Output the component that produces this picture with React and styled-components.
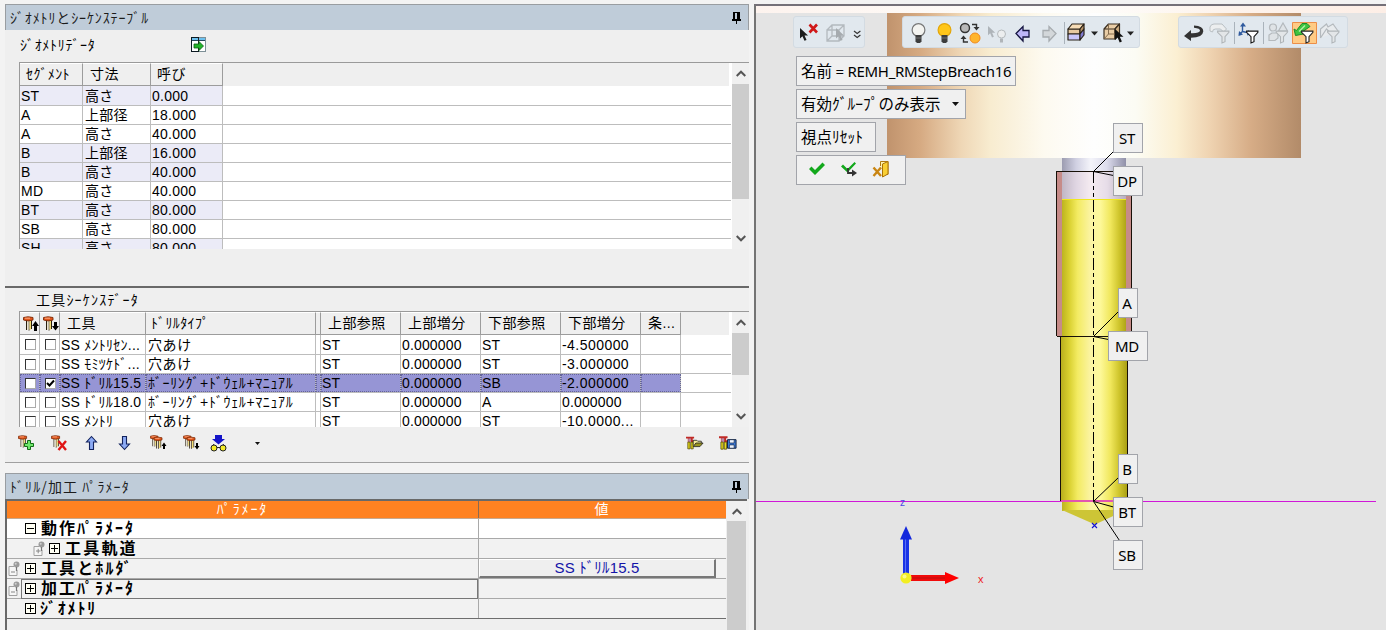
import React from "react";
import styled, { createGlobalStyle } from "styled-components";

const Global = createGlobalStyle`
  * { box-sizing: border-box; }
  body { margin: 0; background: #f3f3f3; overflow: hidden; }
`;

const UI = `"Liberation Sans", "Noto Sans CJK JP", sans-serif`;
const SEGOE = `"Noto Sans", "Noto Sans CJK JP", sans-serif`;

const Window = styled.div`
  display: flex;
  width: 1386px;
  height: 630px;
  overflow: hidden;
  background: #f3f3f3;
  font-family: ${UI};
  font-size: 14px;
  color: #000;
`;

const Side = styled.div`
  width: 754px;
  height: 630px;
  padding: 4px 5px 0;
  display: flex;
  flex-direction: column;
  gap: 10px;
`;

const Panel = styled.section`
  width: 744px;
  height: ${(p) => p.$h}px;
  flex: none;
  background: #efefef;
  display: flex;
  flex-direction: column;
`;

const TitleBar = styled.header`
  height: 26px;
  flex: none;
  display: flex;
  align-items: center;
  justify-content: space-between;
  padding: 0 7px 0 4px;
  background: #bfccd9;
  border: 1px solid #999da1;
  border-bottom: none;
  font-family: "Noto Sans CJK JP", sans-serif;
  font-size: 14px;
  letter-spacing: ${(p) => p.$ls || 0.87}px;
  line-height: 22px;
  color: #1c1c1c;
`;

const TitleText = styled.span`
  height: 24px;
`;

const SectionLabel = styled.div`
  height: ${(p) => p.$h}px;
  flex: none;
  display: flex;
  align-items: center;
  padding-left: ${(p) => p.$left}px;
  padding-bottom: ${(p) => p.$lift || 0}px;
  letter-spacing: ${(p) => p.$ls}px;
  line-height: 20px;
`;

const LabelIcon = styled.span`
  display: flex;
  margin-left: 96px;
`;

const TableBox = styled.div`
  margin-left: 14px;
  width: 730px;
  height: ${(p) => p.$h}px;
  flex: none;
  display: flex;
  border-top: 1px solid #9a9a9a;
  border-left: 1px solid #9a9a9a;
  background: #fff;
  overflow: hidden;
`;

const Rows = styled.div`
  width: 711px;
  margin-right: 1px;
  overflow: hidden;
`;

const HeadRow = styled.div`
  display: grid;
  grid-template-columns: ${(p) => p.$cols};
  height: 23px;
  background: #efefef;
  margin-right: 2px;
`;

const HeadCell = styled.div`
  height: 23px;
  border-top: 1px solid #fff;
  border-right: 1px solid #9c9c9c;
  border-bottom: 1px solid #9c9c9c;
  padding-left: ${(p) => (p.$pad === undefined ? 7 : p.$pad)}px;
  padding-top: ${(p) => (p.$icon ? 3 : 0)}px;
  letter-spacing: 0.4px;
  line-height: 21px;
  white-space: nowrap;
  overflow: hidden;
`;

const Row = styled.div`
  display: grid;
  grid-template-columns: ${(p) => p.$cols};
  height: ${(p) => (p.$first ? 20 : 19)}px;
  line-height: ${(p) => (p.$first ? 20 : 18)}px;
  border-bottom: 1px solid #bdbdbd;
`;

const Cell = styled.div`
  padding-left: ${(p) => (p.$pad === undefined ? 2 : p.$pad)}px;
  border-right: 1px solid #bdbdbd;
  background: ${(p) => (p.$sel ? "#9695d5" : p.$tint ? "#ebebf7" : "transparent")};
  outline: ${(p) => (p.$sel ? "1px dotted #66659a" : "none")};
  outline-offset: -1px;
  display: ${(p) => (p.$center ? "flex" : "block")};
  align-items: center;
  justify-content: center;
  letter-spacing: ${(p) => (p.$ls === undefined ? 0.25 : p.$ls)}px;
  white-space: nowrap;
  overflow: hidden;
`;

const Check = styled.span`
  width: 11px;
  height: 11px;
  border: 1px solid #333;
  border-right-color: #aaa;
  border-bottom-color: #aaa;
  background: #fff;
  display: flex;
`;

const ScrollTrack = styled.div`
  width: ${(p) => p.$w || 17}px;
  flex: none;
  display: flex;
  flex-direction: column;
  justify-content: space-between;
  background: #f0f0f0;
`;

const ScrollArrow = styled.div`
  height: ${(p) => p.$h || 21}px;
  display: flex;
  align-items: center;
  justify-content: center;
`;

const Thumb = styled.div`
  height: ${(p) => p.$h}px;
  background: #cccccc;
  margin-bottom: auto;
`;

const Divider = styled.div`
  height: 2px;
  flex: none;
  background: #696969;
`;

const ToolStrip = styled.div`
  height: 36px;
  flex: none;
  display: flex;
  align-items: center;
  padding: 0 10px 3px 13px;
  border-bottom: 1px solid #a0a0a0;
`;

const StripIcon = styled.span`
  display: flex;
  width: 18px;
  margin-right: ${(p) => p.$gap}px;
`;

const Push = styled.span`
  flex: 1;
`;

const ParamBox = styled.div`
  display: flex;
  flex: 1;
  border-top: 2px solid #696969;
  border-left: 2px solid #696969;
  margin-right: 2px;
`;

const ParamRows = styled.div`
  width: 719px;
  margin-right: 1px;
`;

const ParamHead = styled.div`
  display: grid;
  grid-template-columns: 472px 1fr;
  height: 18px;
  background: #ff8221;
  border-bottom: 1px solid #c6a990;
  color: #fff;
  line-height: 17px;
  text-align: center;
  letter-spacing: 1.9px;
`;

const ParamHeadCell = styled.div`
  border-right: ${(p) => (p.$line ? "1px solid #8c6a50" : "none")};
`;

const ParamRow = styled.div`
  display: grid;
  grid-template-columns: 472px 1fr;
  height: 20px;
  background: ${(p) => (p.$white ? "#fff" : "#f2f2f2")};
  border-bottom: 1px solid ${(p) => (p.$dark ? "#6e6e6e" : "#a9a9a9")};
`;

const ParamName = styled.div`
  display: flex;
  align-items: center;
  height: 19px;
  border-right: 1px solid #a9a9a9;
  padding-left: ${(p) => p.$left}px;
  font-family: "Noto Sans CJK JP", sans-serif;
  font-weight: 700;
  font-size: 16px;
  line-height: 17px;
  letter-spacing: ${(p) => p.$ls}px;
  white-space: nowrap;
`;

const ParamText = styled.span`
  height: 20px;
`;

const Focus = styled.div`
  display: flex;
  align-items: center;
  height: 20px;
  flex: 1;
  margin-left: 1px;
  padding-left: 3px;
  border: 1px solid #777;
`;

const Gap = styled.span`
  width: ${(p) => p.$w}px;
  flex: none;
`;

const ParamValue = styled.div`
  display: flex;
`;

const ValueButton = styled.button`
  width: 237px;
  height: 19px;
  padding: 0;
  border: 1px solid #fff;
  border-right: 2px solid #777;
  border-bottom: 2px solid #777;
  background: #efefef;
  color: #1414a8;
  font-family: ${UI};
  font-size: 15px;
  letter-spacing: 0.15px;
  line-height: 16px;
`;

const Viewport = styled.main`
  position: relative;
  width: 632px;
  height: 626px;
  margin-top: 4px;
  border-left: 2px solid #747474;
  border-top: 2px solid #747078;
  background: #e4e4e4;
  overflow: hidden;
`;

const Scene = styled.svg`
  position: absolute;
  left: 0;
  top: 0;
`;

const Overlay = styled.div`
  position: absolute;
  left: 0;
  top: 0;
  display: flex;
  flex-direction: column;
  align-items: flex-start;
  padding: 10px 0 0 37px;
`;

const ToolbarRow = styled.div`
  display: flex;
  margin-bottom: 8px;
`;

const Toolbar = styled.div`
  display: flex;
  align-items: center;
  width: ${(p) => p.$w}px;
  height: 32px;
  margin-right: ${(p) => p.$gap || 0}px;
  background: #e1e8ee;
  border: 1px solid #d3dbe2;
  border-radius: 3px;
`;

const Tag = styled.div`
  display: flex;
  align-items: center;
  height: 30px;
  width: ${(p) => p.$w}px;
  margin: 0 0 3px 3px;
  padding-left: ${(p) => (p.$flush ? 0 : 4)}px;
  background: #f0f0f0;
  border: 1px solid #a2a4aa;
  font-family: ${SEGOE};
  font-size: 15.5px;
  letter-spacing: ${(p) => p.$ls || 0}px;
  line-height: 28px;
  white-space: nowrap;
`;

const Latin = styled.span`
  font-size: 15px;
  letter-spacing: -0.3px;
  white-space: pre;
`;

const Marker = styled.div`
  position: absolute;
  left: ${(p) => p.$x - 756}px;
  top: ${(p) => p.$y - 6}px;
  width: ${(p) => p.$w}px;
  height: 30px;
  background: #f0f0f0;
  border: 1px solid #a2a4aa;
  font-family: ${SEGOE};
  font-size: 15px;
  letter-spacing: -0.3px;
  line-height: 28px;
  padding-right: 2px;
  text-align: center;
`;

/* ---------- icons ---------- */

const Pin = () => (
  <svg width="9" height="12" viewBox="0 0 9 12" shapeRendering="crispEdges">
    <path d="M1 0h7v7h1v2H5v3H4V9H0V7h1z" fill="#000" />
    <path d="M3 1h2v6H3z" fill="#bfccd9" />
  </svg>
);

const Chevron = ({ down }) => (
  <svg width="10" height="7" viewBox="0 0 10 7">
    <path d={down ? "M.7 1 5 5.3 9.3 1" : "M.7 6 5 1.7 9.3 6"} fill="none" stroke="#555" strokeWidth="2" />
  </svg>
);

const ImportIcon = () => (
  <svg width="15" height="15" viewBox="0 0 15 15" shapeRendering="crispEdges">
    <path d="M.5.5h14v14H.5z" fill="#fff" stroke="#7d8f96" />
    <path d="M8 .5H.5v14H8" fill="none" stroke="#0c1a22" />
    <path d="M1 1h13v2H1z" fill="#6cc0ee" />
    <path d="M1 3h13v1H1z" fill="#24465a" />
    <path d="M7 1h1v13H7z" fill="#222" />
    <path d="M3 7h5V4.5l4.500 4.500L8 13.500V11H3z" fill="#23b42a" stroke="#0a5f10" strokeWidth=".8" shapeRendering="auto" />
  </svg>
);

const Drill = ({ s = 1 }) => (
  <g transform={`scale(${s})`}>
    <path d="M3 4h1v10H3zM5.500 4h1v10.500h-1zM8 4h1v9H8z" fill="#2a2010" />
    <path d="M4 4h1.500v10H4z" fill="#e9e2cc" />
    <path d="M6.500 4H8v9.500H6.500z" fill="#f2dc72" />
    <path d="M.5 1.500Q5 0 10 1.500V4Q5 5.800.5 4z" fill="#e2571c" stroke="#7a2a08" strokeWidth=".9" />
    <path d="M2 2.200h5" stroke="#ffb08a" strokeWidth=".9" />
  </g>
);

const HeadDrill = ({ down }) => (
  <svg width="16" height="16" viewBox="0 0 16 16">
    <Drill />
    <path d={down ? "M11 6h3v4h2l-3.500 4.500L9 10h2z" : "M11 15h3v-5h2l-3.500-5L9 10h2z"} fill="#000" />
  </svg>
);

const AddDrill = () => (
  <svg width="17" height="16" viewBox="0 0 17 16">
    <Drill s={0.86} />
    <path d="M9.500 5.500h3v3h3v3h-3v3h-3v-3h-3v-3h3z" fill="#6ee86a" stroke="#126b16" />
  </svg>
);

const DeleteDrill = () => (
  <svg width="17" height="16" viewBox="0 0 17 16">
    <Drill s={0.86} />
    <path d="m7.500 6 7.500 9m0-9-7.500 9" stroke="#e01414" strokeWidth="2.400" />
  </svg>
);

const MoveArrow = ({ down }) => (
  <svg width="13" height="16" viewBox="0 0 13 16">
    <path
      transform={down ? "rotate(180 6.500 8)" : undefined}
      d="M6.500 1.500 11.500 7H8.500v7.500h-4V7H1.500z"
      fill="#8caaf4"
      stroke="#13235e"
      strokeWidth="1.100"
    />
  </svg>
);

const MultiDrill = ({ down }) => (
  <svg width="17" height="16" viewBox="0 0 17 16">
    <Drill s={0.8} />
    <g transform="translate(3.500 1.500)">
      <Drill s={0.85} />
    </g>
    <path d={down ? "M13 8h2v3h1.500L14 14.500l-2.500-3.500H13z" : "M13 14h2v-3h1.500L14 7.500l-2.500 3.500H13z"} fill="#000" />
  </svg>
);

const GlassesIcon = () => (
  <svg width="17" height="17" viewBox="0 0 17 17">
    <path d="M5 0h7v4h3L8.500 9.500 2 4h3z" fill="#1414c8" />
    <path d="m2 12 2-3m11 3-2-3" stroke="#222" />
    <circle cx="4" cy="13" r="3" fill="#f3ec28" stroke="#222" />
    <circle cx="13" cy="13" r="3" fill="#f3ec28" stroke="#222" />
    <path d="M7 12.500h3" stroke="#222" />
  </svg>
);

const Caret = ({ w = 7 }) => (
  <svg width={w} height={w > 5 ? 4 : 3} viewBox="0 0 7 4">
    <path d="M0 0h7L3.500 4z" fill="#111" />
  </svg>
);

const DrillStand = () => (
  <>
    <path d="M0 1h9v2H7.500v2H9v2H2V3H0z" fill="#c02a26" />
    <path d="M2.500 3h3v4h-3z" fill="#b88aa8" />
    <path d="M2 7h2.500v7.500H2zM5.500 7H8v7.500H5.500z" fill="#e6d91e" stroke="#4d4300" strokeWidth=".8" />
  </>
);

const OpenDrill = () => (
  <svg width="20" height="16" viewBox="0 0 20 16">
    <DrillStand />
    <path d="M8 11V5h4l1 1h4v2" fill="#f6ee9a" stroke="#222" strokeWidth=".9" />
    <path d="m8 12 3-4h8l-3.500 4z" fill="#9a9420" stroke="#222" strokeWidth=".9" />
  </svg>
);

const SaveDrill = () => (
  <svg width="19" height="16" viewBox="0 0 19 16">
    <DrillStand />
    <path d="M9 4.500h9v9H9z" fill="#3f7fe0" stroke="#0d1d3a" />
    <path d="M11 4.500h5v3.500h-5zM11 10h5v3.500h-5z" fill="#eef4ff" stroke="#0d1d3a" strokeWidth=".7" />
  </svg>
);

const Expander = ({ open }) => (
  <svg width="11" height="11" viewBox="0 0 11 11" shapeRendering="crispEdges">
    <path d="M.5.5h10v10H.5z" fill="#fffff4" stroke="#000" />
    <path d={open ? "M2 5.500h7" : "M2 5.500h7M5.500 2v7"} stroke="#000" />
  </svg>
);

const LinkIcon = ({ plus }) => (
  <svg width="12" height="15" viewBox="0 0 12 15">
    <path d="M6 5.500H1v9h8V9" fill="#f6f6f6" stroke="#a0a0a0" />
    <path d={plus ? "M3 10h4.500M5.200 7.800v4.500" : "M3 11h4"} stroke="#888" />
    <circle cx="8.500" cy="3.500" r="3" fill="#9b9b9b" />
    <circle cx="7.700" cy="2.700" r="1" fill="#cfcfcf" />
    <path d="M8.500 6v4" stroke="#777" strokeWidth="1.200" />
  </svg>
);

const cursor = (x, y, fill = "#1a1a1a", s = 1) => (
  <path
    transform={`translate(${x} ${y}) scale(${s})`}
    d="M0 0v11l2.600-2.400L4.700 13.500l2.200-1L4.800 7.800H8.500z"
    fill={fill}
  />
);

const bulb = (fill, ring) => (
  <g>
    <circle cx="7.500" cy="7.500" r="6.400" fill={fill} stroke={ring} strokeWidth="1.200" />
    <path d="M4.500 12.500h6V19l-1.500 1.500H6L4.500 19z" fill="#3d3d3d" />
    <path d="M5 15.500h5" stroke="#888" strokeWidth=".7" />
  </g>
);

const funnel = (x, y, fill, stroke) => (
  <path
    transform={`translate(${x} ${y})`}
    d="M.6.6h11.300v1.200L8 6.200v5L5 12.400V6.200L.6 1.800z"
    fill={fill}
    stroke={stroke}
    strokeWidth="1.100"
  />
);

const SelectTools = () => (
  <svg width="70" height="30" viewBox="794 17 70 30">
    {cursor(800, 28, "#1c1c1c", 0.95)}
    <path d="m809.500 24.500 7.500 8m0-8-7.500 8" stroke="#d01818" strokeWidth="2.600" />
    <g stroke="#b3b9be" fill="none" strokeWidth="1.300">
      <path d="M827 30h12v11h-12zM827 30l5-5h12v11l-5 5M839 30l5-5M832 25v11l-5 5M832 36h12" />
    </g>
    {cursor(836, 28, "#a6abaf", 0.95)}
    <path d="m854 31 3.200 2.500 3.200-2.500m-6.400 4 3.200 2.500 3.200-2.500" fill="none" stroke="#333" strokeWidth="1.200" />
  </svg>
);

const ViewTools = () => (
  <svg width="236" height="30" viewBox="903 17 236 30">
    <g transform="translate(911 22.500)">{bulb("#f3f3f0", "#777")}</g>
    <g transform="translate(937 22.500)">{bulb("#ffc61a", "#e3a70c")}</g>
    <circle cx="965" cy="28" r="4.500" fill="#b8b8b8" stroke="#333" strokeWidth="1.400" />
    <circle cx="975" cy="38" r="5" fill="#ffb52e" stroke="#f08a1e" />
    <path d="M972 24.500h4.500v3M963.500 38v4h4.500" fill="none" stroke="#333" strokeWidth="1.400" />
    <path d="M973.500 27h6l-3 3.500zM960.500 39h6l-3-3.500z" fill="#333" />
    {cursor(988, 26, "#aeb4b9", 0.85)}
    <circle cx="1001.500" cy="34" r="4" fill="#eceeef" stroke="#b5babd" />
    <path d="M1000 38.500h3v4h-3z" fill="#b0b5b9" />
    <path d="m1016 33.500 7-7v4h6v6.500h-6v4z" fill="#bdb6f8" stroke="#151540" strokeWidth="1.300" />
    <path d="m1056 33.500-7-7v4h-6v6.500h6v4z" fill="#d3d7da" stroke="#a7acb0" strokeWidth="1.300" />
    <path d="M1064.500 22v22" stroke="#aab3bb" />
    <g transform="translate(1067 23)" stroke="#2a2218" strokeWidth="1.200" strokeLinejoin="round">
      <path d="M1 6h12v5H1z" fill="#e7c9a0" />
      <path d="m1 6 4-5h12l-4 5z" fill="#f6dcb6" />
      <path d="m13 6 4-5v5l-4 5z" fill="#b89468" />
      <path d="M1 11h12v6H1z" fill="#c9c6fa" />
      <path d="m13 11 4-5v6l-4 5z" fill="#7f7ad0" />
    </g>
    <path d="M1091 31.500h7l-3.500 4z" fill="#222" />
    <g transform="translate(1103 23)" stroke="#3a2e20" strokeWidth="1.200" strokeLinejoin="round">
      <path d="M1 6h11v10H1zM1 6l4.500-5h11L12 6z" fill="#e9cda6" />
      <path d="m12 6 4.500-5v10L12 16z" fill="#cfae82" />
      <path d="M5.500 1v10L1 16M5.500 11H14" fill="none" stroke="#7a6244" strokeWidth=".9" />
    </g>
    {cursor(1115, 29, "#111", 1)}
    <path d="M1127 31.500h7l-3.500 4z" fill="#222" />
  </svg>
);

const FilterTools = () => (
  <svg width="168" height="30" viewBox="1179 17 168 30">
    <path
      d="M1184 36 1191 30v3.200q8.500.3 9-2.400.3-2.300-6-3v-2.300q9.500.4 9.300 5.800-.5 6.500-12.300 6.500V41z"
      fill="#333"
    />
    <path d="M1210 31v-4q1-3 4-3h8l4.500 5-3 3-3-3h-5q-3 0-3 3z" fill="#eceeef" stroke="#b9bfc3" />
    {funnel(1217, 30.5, "#e3e6e8", "#b0b5b8")}
    <path d="M1234.500 22v22" stroke="#aab3bb" />
    <path d="M1242.500 32V25m0 6.500 7 1.500m-7-1.500-3.500 3" stroke="#2f5a9e" strokeWidth="1.400" fill="none" />
    <path d="m1243 22.500 3 4h-6zM1252 34l-5 1.500 1-5.500zM1238.500 36l.5-5 4 3.500z" fill="#2f5a9e" />
    {funnel(1246, 30.5, "#fff", "#111")}
    <path d="M1263.500 22v22" stroke="#aab3bb" />
    <g fill="#dfe3e6" stroke="#b4b9bd" strokeWidth="1.200">
      <circle cx="1273" cy="27.500" r="3.500" />
      <path d="m1283 23 4.500 8h-9z" />
      <path d="M1269 35l3-2h6v5l-3 2.500h-6z" />
    </g>
    {funnel(1275.5, 30.5, "#e3e6e8", "#b0b5b8")}
    <path d="M1292.500 22.500h24v21h-24z" fill="#ffcb85" stroke="#ec8e48" />
    <path d="m1294 29 1.500 6.500 8-1.500-2-1.500 8.500-6-3-3h-5l-5.500 7z" fill="#3fc43f" stroke="#1f8c28" />
    <path d="m1299 31.500 6-6" stroke="#b6f0a8" strokeWidth="1.500" />
    {funnel(1301, 30.5, "#fff", "#222")}
    <path d="M1320.500 38v-9l6-5 1.500 3 5-3 5 7M1320.500 38l6-9 3 3" fill="#e8ebed" stroke="#b4b9bd" strokeWidth="1.200" />
    {funnel(1327, 30.5, "#e3e6e8", "#b0b5b8")}
  </svg>
);

const ConfirmIcons = () => (
  <svg width="104" height="28" viewBox="797 156 104 28">
    <path d="m809 169 2.500-2.500 3.500 3.500 7.500-7.500 2.500 2.500-10 10z" fill="#12a81b" />
    <path d="m841 166.500 2-2 4.500 4.500 7-7 1.500 1.500-8.500 9z" fill="#12a81b" />
    <path d="M848 168v5h5" fill="none" stroke="#333" strokeWidth="1.800" />
    <path d="m852 169.500 5 3.500-5 3.500z" fill="#333" />
    <path d="M880.500 166v-4.500h7.500v13h-3" fill="#fff2b0" stroke="#b07a10" />
    <path d="m882.500 164 5.500-2.500v12.500l-5.500 3z" fill="#f9cf34" stroke="#a87208" />
    <path d="m873.500 167.500 7.500 8.500m0-8.500-7.500 8.500" stroke="#c98512" strokeWidth="2.400" />
  </svg>
);

/* ---------- data ---------- */

const geoCols = "63px 68px 72px 1fr";
const geometry = [
  ["ST", "高さ", "0.000", true],
  ["A", "上部径", "18.000", false],
  ["A", "高さ", "40.000", false],
  ["B", "上部径", "16.000", true],
  ["B", "高さ", "40.000", true],
  ["MD", "高さ", "40.000", false],
  ["BT", "高さ", "80.000", true],
  ["SB", "高さ", "80.000", false],
  ["SH", "高さ", "80.000", true],
];

const seqCols = "20px 20px 86px 170px 5px 80px 80px 80px 80px 40px 1fr";
const sequence = [
  ["SS ﾒﾝﾄﾘｾﾝ...", "穴あけ", "ST", "0.000000", "ST", "-4.500000"],
  ["SS ﾓﾐﾂｹﾄﾞ...", "穴あけ", "ST", "0.000000", "ST", "-3.000000"],
  ["SS ﾄﾞﾘﾙ15.5", "ﾎﾞｰﾘﾝｸﾞ+ﾄﾞｳｪﾙ+ﾏﾆｭｱﾙ", "ST", "0.000000", "SB", "-2.000000"],
  ["SS ﾄﾞﾘﾙ18.0", "ﾎﾞｰﾘﾝｸﾞ+ﾄﾞｳｪﾙ+ﾏﾆｭｱﾙ", "ST", "0.000000", "A", "0.000000"],
  ["SS ﾒﾝﾄﾘ", "穴あけ", "ST", "0.000000", "ST", "-10.0000..."],
];

const markers = [
  ["ST", 1113, 123, 30],
  ["DP", 1113, 166, 30],
  ["A", 1118, 288, 20],
  ["MD", 1108, 331, 40],
  ["B", 1118, 454, 20],
  ["BT", 1113, 497, 30],
  ["SB", 1113, 540, 30],
];

/* ---------- parts ---------- */

const Scroll = ({ thumb }) => (
  <ScrollTrack>
    <ScrollArrow><Chevron /></ScrollArrow>
    <Thumb $h={thumb} />
    <ScrollArrow><Chevron down /></ScrollArrow>
  </ScrollTrack>
);

const GeometryTable = () => (
  <TableBox $h={187}>
    <Rows>
      <HeadRow $cols={geoCols}>
        <HeadCell $pad={6}>ｾｸﾞﾒﾝﾄ</HeadCell>
        <HeadCell>寸法</HeadCell>
        <HeadCell $pad={6}>呼び</HeadCell>
      </HeadRow>
      {geometry.map(([seg, dim, nom, tint], i) => (
        <Row key={i} $cols={geoCols} $first={i === 0}>
          <Cell $tint={tint} $pad={1}>{seg}</Cell>
          <Cell $tint={tint}>{dim}</Cell>
          <Cell $tint={tint} $pad={1}>{nom}</Cell>
        </Row>
      ))}
    </Rows>
    <Scroll thumb={115} />
  </TableBox>
);

const CheckBox = ({ on }) => (
  <Check>
    {on && (
      <svg width="9" height="9" viewBox="0 0 9 9">
        <path d="m1 4 2.500 2.500L8 1.500" fill="none" stroke="#000" strokeWidth="2" />
      </svg>
    )}
  </Check>
);

const SequenceTable = () => (
  <TableBox $h={116}>
    <Rows>
      <HeadRow $cols={seqCols}>
        <HeadCell $pad={3} $icon><HeadDrill /></HeadCell>
        <HeadCell $pad={3} $icon><HeadDrill down /></HeadCell>
        <HeadCell>工具</HeadCell>
        <HeadCell $pad={5}>ﾄﾞﾘﾙﾀｲﾌﾟ</HeadCell>
        <HeadCell $pad={0} />
        <HeadCell>上部参照</HeadCell>
        <HeadCell>上部増分</HeadCell>
        <HeadCell>下部参照</HeadCell>
        <HeadCell>下部増分</HeadCell>
        <HeadCell>条...</HeadCell>
      </HeadRow>
      {sequence.map(([tool, type, ...vals], i) => {
        const sel = i === 2;
        return (
          <Row key={i} $cols={seqCols} $first={i === 0}>
            <Cell $center $pad={1} $sel={sel}><CheckBox /></Cell>
            <Cell $center $pad={1} $sel={sel}><CheckBox on={sel} /></Cell>
            <Cell $sel={sel} $pad={1}>{tool}</Cell>
            <Cell $sel={sel} $ls={0.62}>{type}</Cell>
            <Cell $sel={sel} $pad={0} />
            {vals.map((v, k) => (
              <Cell key={k} $sel={sel} $ls={v[0] === "-" ? 0.45 : 0.15} $pad={1}>{v}</Cell>
            ))}
            <Cell $sel={sel} />
          </Row>
        );
      })}
    </Rows>
    <Scroll thumb={42} />
  </TableBox>
);

const GeometryPanel = () => (
  <Panel $h={459}>
    <TitleBar><TitleText>ｼﾞｵﾒﾄﾘとｼｰｹﾝｽﾃｰﾌﾞﾙ</TitleText><Pin /></TitleBar>
    <SectionLabel $h={32} $left={15} $ls={0.68} $lift={3}>
      ｼﾞｵﾒﾄﾘﾃﾞｰﾀ
      <LabelIcon><ImportIcon /></LabelIcon>
    </SectionLabel>
    <GeometryTable />
    <Push />
    <Divider />
    <SectionLabel $h={23} $left={31} $ls={1.2}>工具ｼｰｹﾝｽﾃﾞｰﾀ</SectionLabel>
    <SequenceTable />
    <ToolStrip>
      <StripIcon $gap={15}><AddDrill /></StripIcon>
      <StripIcon $gap={16}><DeleteDrill /></StripIcon>
      <StripIcon $gap={15}><MoveArrow /></StripIcon>
      <StripIcon $gap={14}><MoveArrow down /></StripIcon>
      <StripIcon $gap={15}><MultiDrill /></StripIcon>
      <StripIcon $gap={9}><MultiDrill down /></StripIcon>
      <StripIcon $gap={27}><GlassesIcon /></StripIcon>
      <Caret w={5} />
      <Push />
      <StripIcon $gap={15}><OpenDrill /></StripIcon>
      <StripIcon $gap={2}><SaveDrill /></StripIcon>
    </ToolStrip>
  </Panel>
);

const ParameterPanel = () => (
  <Panel $h={157}>
    <TitleBar $ls={1.1}><TitleText>ﾄﾞﾘﾙ/加工 ﾊﾟﾗﾒｰﾀ</TitleText><Pin /></TitleBar>
    <ParamBox>
      <ParamRows>
        <ParamHead>
          <ParamHeadCell $line>ﾊﾟﾗﾒｰﾀ</ParamHeadCell>
          <ParamHeadCell>値</ParamHeadCell>
        </ParamHead>
        <ParamRow $white>
          <ParamName $left={18} $ls={2}><Expander open /><Gap $w={5} /><ParamText>動作ﾊﾟﾗﾒｰﾀ</ParamText></ParamName>
        </ParamRow>
        <ParamRow>
          <ParamName $left={26} $ls={2.2}><LinkIcon plus /><Gap $w={4} /><Expander /><Gap $w={5} /><ParamText>工具軌道</ParamText></ParamName>
        </ParamRow>
        <ParamRow>
          <ParamName $left={1} $ls={2.1}><LinkIcon /><Gap $w={5} /><Expander /><Gap $w={5} /><ParamText>工具とﾎﾙﾀﾞ</ParamText></ParamName>
          <ParamValue><ValueButton>SS ﾄﾞﾘﾙ15.5</ValueButton></ParamValue>
        </ParamRow>
        <ParamRow>
          <ParamName $left={1} $ls={2}>
            <LinkIcon />
            <Focus><Expander /><Gap $w={5} /><ParamText>加工ﾊﾟﾗﾒｰﾀ</ParamText></Focus>
          </ParamName>
        </ParamRow>
        <ParamRow $dark>
          <ParamName $left={18} $ls={1.8}><Expander /><Gap $w={4} /><ParamText>ｼﾞｵﾒﾄﾘ</ParamText></ParamName>
        </ParamRow>
      </ParamRows>
      <ScrollTrack $w={19}>
        <ScrollArrow $h={20}><Chevron /></ScrollArrow>
        <Thumb $h={109} />
      </ScrollTrack>
    </ParamBox>
  </Panel>
);

const Model = () => (
  <Scene width="630" height="624" viewBox="756 6 630 624">
    <defs>
      <linearGradient id="holder">
        <stop offset="0" stopColor="#c0936d" />
        <stop offset=".08" stopColor="#d6aa82" />
        <stop offset=".18" stopColor="#efd7b6" />
        <stop offset=".25" stopColor="#f8ecd0" />
        <stop offset=".38" stopColor="#fdfaf0" />
        <stop offset=".5" stopColor="#fefefe" />
        <stop offset=".6" stopColor="#fcfcf4" />
        <stop offset=".7" stopColor="#fbefd2" />
        <stop offset=".78" stopColor="#efd3b1" />
        <stop offset=".88" stopColor="#d6ac86" />
        <stop offset="1" stopColor="#b28b69" />
      </linearGradient>
      <linearGradient id="shank">
        <stop offset="0" stopColor="#9c9cb0" />
        <stop offset=".22" stopColor="#d0d0e2" />
        <stop offset=".45" stopColor="#f4f4fa" />
        <stop offset=".7" stopColor="#dcdcec" />
        <stop offset="1" stopColor="#9090a8" />
      </linearGradient>
      <linearGradient id="cutter">
        <stop offset="0" stopColor="#b9af1e" />
        <stop offset=".12" stopColor="#d8cf2e" />
        <stop offset=".25" stopColor="#f3eb62" />
        <stop offset=".45" stopColor="#fbf4a4" />
        <stop offset=".6" stopColor="#fdf898" />
        <stop offset=".75" stopColor="#f0e75c" />
        <stop offset=".88" stopColor="#cfc52c" />
        <stop offset="1" stopColor="#aaa015" />
      </linearGradient>
      <linearGradient id="strip">
        <stop offset="0" stopColor="#fdf3ee" />
        <stop offset=".5" stopColor="#fefefc" />
        <stop offset=".75" stopColor="#fdf3ec" />
        <stop offset="1" stopColor="#fdeee6" />
      </linearGradient>
    </defs>
    <path d="M756 6h630v7H756z" fill="url(#strip)" />
    <path d="M887 13h414v145H887z" fill="url(#holder)" />
    <path d="M1062 158h64v42h-64z" fill="url(#shank)" />
    <path d="M1057 172h5v164h-5zM1126 172h5v164h-5z" fill="#c68b88" />
    <path d="M1062 172h64v27h-64z" fill="#f7dfe3" opacity=".4" />
    <path d="M1062 199h64v138h-64zM1061 337h66v164h-66zM1062 501h64v10h-64z" fill="url(#cutter)" />
    <path d="M1062 510h64l-31 14.500z" fill="#cdc536" />
    <path d="M1062 199.500h64" stroke="#f0e820" />
    <g fill="none" stroke="#181008" shapeRendering="crispEdges">
      <path d="M1056.500 336V171.500h75V336M1056.500 336.500h75" strokeWidth="1.400" />
      <path d="M1060.500 337v164M1127.500 337v164" strokeWidth="1.400" />
    </g>
    <rect x="756" y="501" width="620" height="1" fill="#d018d8" />
    <rect x="1061" y="500" width="66" height="2" fill="#e255b0" />
    <path d="M1093.500 171v330" stroke="#000" strokeDasharray="12 3 4 3 4 3" shapeRendering="crispEdges" />
    <path
      d="m1093.500 171.500 20-20m-20 20 20 4M1093.500 336.500l25-25m-25 25 15 3M1093.500 501.500l25-24m-25 24 20 5.500m-20-5.500 26 39"
      stroke="#000"
      fill="none"
    />
    <path d="m1092 523 5 5m0-5-5 5" stroke="#1414d0" strokeWidth="1.100" />
    <path d="M903 538h6v36h-6z" fill="#1832e6" />
    <path d="M905.500 538v36" stroke="#5a70f2" />
    <path d="m906 526 6 13.500h-12z" fill="#1428dc" />
    <path d="M911 575h35v6h-35z" fill="#f00a0a" />
    <path d="M911 578h35" stroke="#b81010" />
    <path d="m959 578-14 6v-12z" fill="#ff0000" />
    <circle cx="906" cy="578" r="5.600" fill="#f2ee22" />
    <circle cx="904.500" cy="576.500" r="2" fill="#fbfa8a" />
    <text x="900" y="506" fontFamily="Liberation Sans" fontSize="10" fill="#4a4ae6">z</text>
    <text x="978" y="583" fontFamily="Liberation Sans" fontSize="11" fill="#ee2222">x</text>
  </Scene>
);

export default function App() {
  return (
    <>
      <Global />
      <Window>
        <Side>
          <GeometryPanel />
          <ParameterPanel />
        </Side>
        <Viewport>
          <Model />
          {markers.map(([t, x, y, w]) => (
            <Marker key={t} $x={x} $y={y} $w={w}>{t}</Marker>
          ))}
          <Overlay>
            <ToolbarRow>
              <Toolbar $w={72} $gap={37}><SelectTools /></Toolbar>
              <Toolbar $w={238} $gap={38}><ViewTools /></Toolbar>
              <Toolbar $w={170}><FilterTools /></Toolbar>
            </ToolbarRow>
            <Tag $w={220}>名前<Latin> = REMH_RMStepBreach16</Latin></Tag>
            <Tag $w={170}>有効ｸﾞﾙｰﾌﾟのみ表示<Gap $w={11} /><Caret w={7} /></Tag>
            <Tag $w={80}>視点ﾘｾｯﾄ</Tag>
            <Tag $w={110} $flush><ConfirmIcons /></Tag>
          </Overlay>
        </Viewport>
      </Window>
    </>
  );
}
